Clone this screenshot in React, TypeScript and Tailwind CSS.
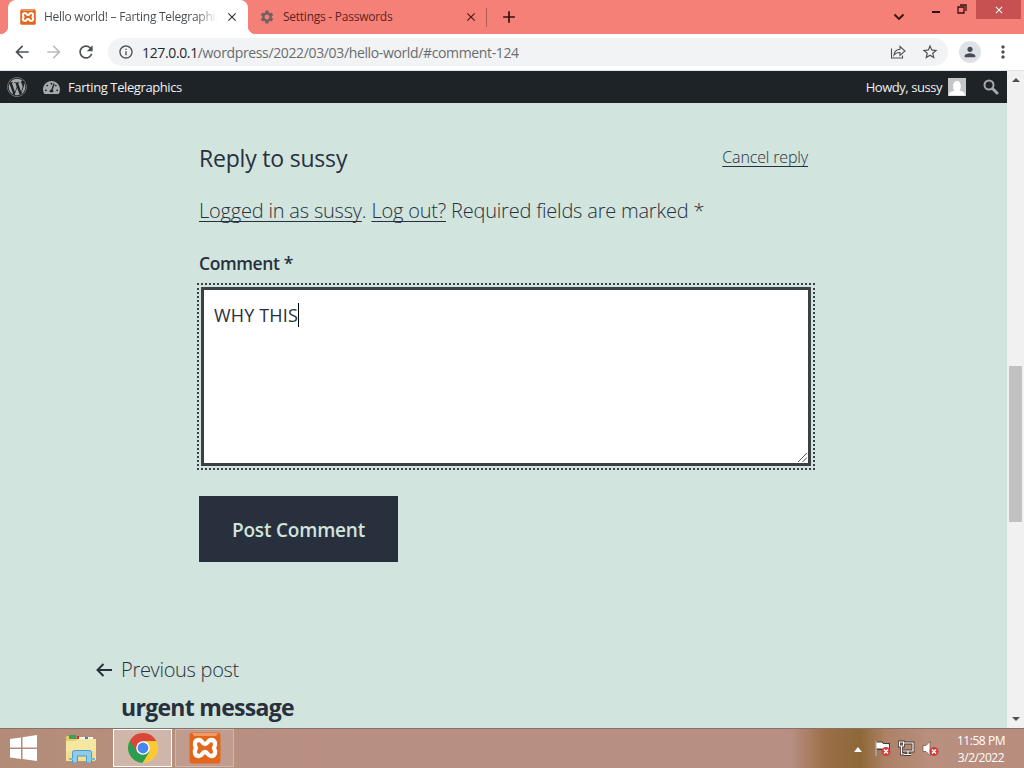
import type { ReactNode } from "react";
import {
  MdAdd,
  MdArrowBack,
  MdArrowForward,
  MdClose,
  MdInfoOutline,
  MdMoreVert,
  MdPerson,
  MdRefresh,
  MdSettings,
  MdStarBorder,
} from "react-icons/md";
import { FaTachometerAlt, FaWordpress } from "react-icons/fa";

function XamppIcon({ className }: { className?: string }) {
  return (
    <svg viewBox="0 0 32 32" className={className}>
      <rect x="0.5" y="0.5" width="31" height="31" rx="3" fill="#e4661c" />
      <path d="M3 1h26l-2 3H5z" fill="#f09a63" />
      <path
        d="M10 8c-4.500 0-5 4.500-3 8-2 3.500-1.500 8 3 8 3.500 0 3-4 6-4s2.500 4 6 4c4.500 0 5-4.500 3-8 2-3.500 1.500-8-3-8-3.500 0-3 4-6 4s-2.500-4-6-4z"
        fill="none"
        stroke="#fff"
        strokeWidth="4.300"
        strokeLinejoin="round"
      />
    </svg>
  );
}

function Tabs() {
  return (
    <div className="flex h-[34px] shrink-0 bg-[#f58078] text-[12px]">
      <div className="relative ml-2 flex w-[240px] items-center rounded-t-[8px] bg-white pl-3">
        <span className="absolute bottom-0 -left-2 size-2 bg-[radial-gradient(circle_at_0_0,transparent_8px,#fff_8.5px)]" />
        <span className="absolute -right-2 bottom-0 size-2 bg-[radial-gradient(circle_at_100%_0,transparent_8px,#fff_8.5px)]" />
        <XamppIcon className="size-4 shrink-0" />
        <span className="ml-2 w-[173px] overflow-hidden bg-linear-to-r from-[#45494d] from-88% to-transparent bg-clip-text tracking-[-0.27px] whitespace-nowrap text-transparent">
          Hello world! – Farting Telegraphics
        </span>
        <MdClose className="ml-2 size-[14px] text-[#333]" />
      </div>
      <div className="flex w-[238px] items-center pl-[11px]">
        <MdSettings className="size-4 text-[#75605f]" />
        <span className="ml-2 w-[180px] tracking-[-0.25px] text-[#5a2522]">
          Settings - Passwords
        </span>
        <MdClose className="ml-px size-[14px] text-[#4b1a16]" />
      </div>
      <div className="mt-2 h-[19px] w-px bg-[#b25b55]" />
      <MdAdd className="mt-[7px] ml-3 size-5 text-[#35100e]" />
      <div className="ml-auto flex items-start text-[#35100e]">
        <svg viewBox="0 0 12 8" className="mt-[13px] h-2 w-3">
          <path d="M1.500 1.500L6 6l4.500-4.500" fill="none" stroke="currentColor" strokeWidth="1.800" />
        </svg>
        <div className="mt-[11px] ml-[27px] h-[2px] w-2 bg-current" />
        <svg viewBox="0 0 10 10" className="mt-1 ml-[17px] size-[10px]">
          <path d="M1 3h6v6H1zM3 1h6v6" fill="none" stroke="currentColor" strokeWidth="1.300" />
        </svg>
        <div className="mr-[3px] ml-[9px] flex h-[19px] w-[45px] items-center justify-center bg-[#c75050]">
          <MdClose className="size-3 text-white" />
        </div>
      </div>
    </div>
  );
}

function Toolbar() {
  return (
    <div className="flex h-[37px] shrink-0 items-center border-b border-[#e1e4e4] bg-white text-[#4d5155]">
      <MdArrowBack className="ml-3 size-5 shrink-0" />
      <MdArrowForward className="ml-3 size-5 shrink-0 text-[#bbbdbf]" />
      <MdRefresh className="ml-3 size-5 shrink-0" />
      <div className="ml-3 flex h-[28px] w-[840px] shrink-0 items-center rounded-full bg-[#f1f3f4] pl-[10px]">
        <MdInfoOutline className="size-4" />
        <span className="ml-2 text-[14px] tracking-[-0.36px] text-[#686c70]">
          <span className="text-[#25282b]">127.0.0.1</span>
          /wordpress/2022/03/03/hello-world/#comment-124
        </span>
        <svg viewBox="0 0 16 16" className="mr-[15px] ml-auto size-4">
          <path
            d="M1.500 4.500v9.500h11v-2.500M4 11c.500-4 2.500-5.500 6-5.700V2.500L15 7l-5 4.300V8.500C7 8.500 5.500 9 4 11z"
            fill="none"
            stroke="currentColor"
            strokeWidth="1.100"
          />
        </svg>
        <MdStarBorder className="mr-[9px] size-[18px]" />
      </div>
      <div className="ml-[11px] flex size-[22px] shrink-0 items-center justify-center rounded-full bg-[#dee1e6]">
        <MdPerson className="size-4 text-[#454c58]" />
      </div>
      <MdMoreVert className="ml-3 size-5 shrink-0" />
    </div>
  );
}

function AdminBar() {
  return (
    <div className="flex h-8 shrink-0 items-center bg-[#1d2327] text-[13px] text-[#f0f0f1]">
      <FaWordpress className="ml-[7px] size-5 text-[#a7aaad]" />
      <FaTachometerAlt className="ml-4 size-[17px] text-[#a7aaad]" />
      <span className="mt-px ml-2 tracking-[-0.4px]">Farting Telegraphics</span>
      <span className="mt-px ml-auto tracking-[-0.45px]">Howdy, sussy</span>
      <svg viewBox="0 0 18 18" className="ml-[6px] size-[18px]">
        <rect width="18" height="18" fill="#c6c6c6" />
        <path d="M1 17.500c0-3 2-4 5.500-5-2-1.500-2.300-9.500 2.500-9.500s4.500 8 2.500 9.500c3.500 1 5.500 2 5.500 5z" fill="#fff" />
      </svg>
      <svg viewBox="0 0 16 16" className="mr-2 ml-[17px] size-4">
        <circle cx="6" cy="6" r="4.500" fill="none" stroke="#a7aaad" strokeWidth="2" />
        <path d="M9.500 9.500l4.500 4.500" stroke="#a7aaad" strokeWidth="3" strokeLinecap="round" />
      </svg>
    </div>
  );
}

function TextLink({ children }: { children: ReactNode }) {
  return (
    <a className="underline decoration-[#28303d] decoration-1 underline-offset-[3px] [text-decoration-skip-ink:none]">
      {children}
    </a>
  );
}

function ReplyForm() {
  return (
    <div className="ml-[199px] w-[616px] shrink-0 pt-10">
      <div className="flex h-8 items-center justify-between pr-[7px]">
        <h3 className="-mt-px text-[23px] tracking-[-0.2px] whitespace-nowrap">Reply to sussy</h3>
        <span className="-mt-[5px] text-[16px] font-light tracking-[-0.15px] whitespace-nowrap">
          <TextLink>Cancel reply</TextLink>
        </span>
      </div>
      <p className="mt-5 h-8 text-[20px] leading-8 font-light tracking-[-0.2px] whitespace-nowrap">
        <TextLink>Logged in as sussy</TextLink>. <TextLink>Log out?</TextLink> Required fields are marked *
      </p>
      <p className="mt-[22px] h-7 text-[17.500px] leading-7 font-semibold tracking-[-0.4px]">Comment *</p>
      <div className="relative mt-[10px] ml-[2px] flex h-[179px] w-[610px] items-start border-[3px] border-[#394145] bg-white px-[10px] pt-[10px] outline-2 outline-offset-2 outline-[#394145] outline-dotted">
        <span className="mt-px text-[18px] leading-7 tracking-[0.150px]">WHY THIS</span>
        <span className="mt-[3px] h-6 w-px bg-black" />
        <svg viewBox="0 0 9 9" className="absolute right-px bottom-px size-[9px]">
          <path d="M0 9L9 0M4.500 9L9 4.500" stroke="#555" strokeWidth="1" />
        </svg>
      </div>
      <button className="mt-[30px] h-[66px] w-[199px] bg-[#28303d] pt-[2px] text-[19px] font-semibold tracking-[-0.2px] text-[#d1e4dd]">
        Post Comment
      </button>
    </div>
  );
}

function Page() {
  return (
    <div className="flex min-w-0 flex-1 flex-col overflow-hidden bg-[#d1e4dd] text-[#28303d]">
      <AdminBar />
      <ReplyForm />
      <div className="mt-[92px] ml-[94px] grid shrink-0 grid-cols-[27px_1fr]">
        <svg viewBox="0 0 20 16" className="mt-2 h-4 w-5">
          <path d="M18 8H3M9.500 2L3.500 8l6 6" fill="none" stroke="currentColor" strokeWidth="2" />
        </svg>
        <p className="h-8 text-[20px] leading-8 font-light tracking-[-0.3px]">Previous post</p>
        <p className="col-start-2 mt-px text-[23px] leading-10 font-bold tracking-[-0.7px]">urgent message</p>
      </div>
    </div>
  );
}

function Scrollbar() {
  return (
    <div className="flex w-[17px] flex-col items-center bg-[#f1f1f1]">
      <svg viewBox="0 0 8 4" className="mt-[7px] h-1 w-2">
        <path d="M0 4l4-4 4 4z" fill="#505050" />
      </svg>
      <div className="mt-[284px] h-[156px] w-[13px] bg-[#c1c1c1]" />
      <svg viewBox="0 0 8 4" className="mt-auto mb-[7px] h-1 w-2">
        <path d="M0 0l4 4 4-4z" fill="#505050" />
      </svg>
    </div>
  );
}

function ErrorBadge() {
  return (
    <>
      <circle cx="12" cy="11.500" r="4.500" fill="#d23b3b" />
      <path d="M10 9.500l4 4M14 9.500l-4 4" stroke="#fff" strokeWidth="1.500" />
    </>
  );
}

function Taskbar() {
  return (
    <div className="flex h-10 shrink-0 items-center border-t border-[#887169] bg-[linear-gradient(90deg,#b38c78_0,#b6917f_200px,#b98f84_300px,#b88f83_790px,#9b6f49_825px,#8c6837_860px,#ac8166_885px,#b98f7e_930px,#b88c7e_1024px)] pb-px">
      <svg viewBox="0 0 27 26" className="ml-[10px] h-[26px] w-[27px]">
        <path d="M0 4l11-1.500v10H0zM12.500 2.200L27 0v12.500H12.500zM0 14h11v10L0 22.500zM12.500 14H27v12l-14.500-2z" fill="#fff" />
      </svg>
      <svg viewBox="0 0 32 30" className="ml-7 h-[30px] w-8">
        <path d="M1 3h8l2 3h19v22H1z" fill="#e8cf72" stroke="#c9a848" strokeWidth="0.500" />
        <path d="M4 2h7v4H4z" fill="#3c9f59" />
        <path d="M14 4h14v6H14z" fill="#f8f8f0" />
        <path d="M20 4h3v3h-3z" fill="#397fcb" />
        <path d="M12 3h2v3h-2z" fill="#bf3525" />
        <path d="M1 8h10l2-2h18v21l-4 1H1z" fill="#f5e6a0" />
        <path d="M1 18h29v10H1z" fill="#eed886" opacity="0.600" />
        <path d="M7.500 30V19.500q0-2 2-2h15q2 0 2 2V30h-5v-7h-9v7z" fill="#8ecbea" stroke="#4b9ccc" strokeWidth="1" />
        <path d="M4 26h4M26 26h4" stroke="#70b9e0" strokeWidth="2" />
      </svg>
      <div className="ml-4 flex h-[38px] w-[59px] items-center justify-center border border-white bg-[#d0b6aa]">
        <svg viewBox="0 0 30 30" className="size-[30px]">
          <circle cx="15" cy="15" r="15" fill="#fbc934" />
          <path d="M15 15L2 7.500A15 15 0 0 0 14.500 30l7-11.500z" fill="#2c9c50" />
          <path d="M2 7.500A15 15 0 0 1 28.200 8H15l-6.500 10.500z" fill="#d9473a" />
          <circle cx="15" cy="15" r="6.800" fill="#fff" />
          <circle cx="15" cy="15" r="5.400" fill="#4587ee" />
        </svg>
      </div>
      <div className="ml-[3px] flex h-[38px] w-[59px] items-center justify-center border border-[#d0b5aa] bg-[#bf9c8d]">
        <XamppIcon className="size-8" />
      </div>
      <svg viewBox="0 0 8 5" className="mt-[2px] ml-auto h-[5px] w-2">
        <path d="M0 5l4-5 4 5z" fill="#fff" />
      </svg>
      <svg viewBox="0 0 17 17" className="mt-px ml-3 size-[17px]">
        <path d="M2 1v15M3 2.500h5l1 1.500h6v6H9L8 9H3z" fill="#fff" stroke="#493a34" strokeWidth="2" />
        <path d="M2 1v15M3 3h5l1 1.500h5.500V9H9L8 8H3z" fill="#fff" stroke="#fff" strokeWidth="1" />
        <ErrorBadge />
      </svg>
      <svg viewBox="0 0 17 17" className="mt-px ml-[7px] size-[17px]">
        <path d="M6 3h9v8H5M10 11v3M6 14.500h7M1.500 2h4v4h-4zM3.500 6v8h3" fill="none" stroke="#493a34" strokeWidth="2.800" />
        <path d="M6 3h9v8H5M10 11v3M6 14.500h7M1.500 2h4v4h-4zM3.500 6v8h3" fill="none" stroke="#fff" strokeWidth="1.200" />
      </svg>
      <svg viewBox="0 0 17 17" className="mt-px ml-[7px] size-[17px]">
        <path d="M1 5.500h3L8 1.500v14l-4-4H1z" fill="#fff" stroke="#6b5248" strokeWidth="0.700" />
        <ErrorBadge />
      </svg>
      <div className="mt-px mr-[18px] ml-[17px] w-[50px] text-center text-[12px] leading-[17px] tracking-[-0.45px] whitespace-nowrap text-white">
        <div>11:58 PM</div>
        <div>3/2/2022</div>
      </div>
    </div>
  );
}

export default function App() {
  return (
    <div className="flex h-[768px] w-[1024px] flex-col overflow-hidden font-['Open_Sans','Noto_Sans',sans-serif]">
      <Tabs />
      <Toolbar />
      <div className="flex min-h-0 flex-1">
        <Page />
        <Scrollbar />
      </div>
      <Taskbar />
    </div>
  );
}
